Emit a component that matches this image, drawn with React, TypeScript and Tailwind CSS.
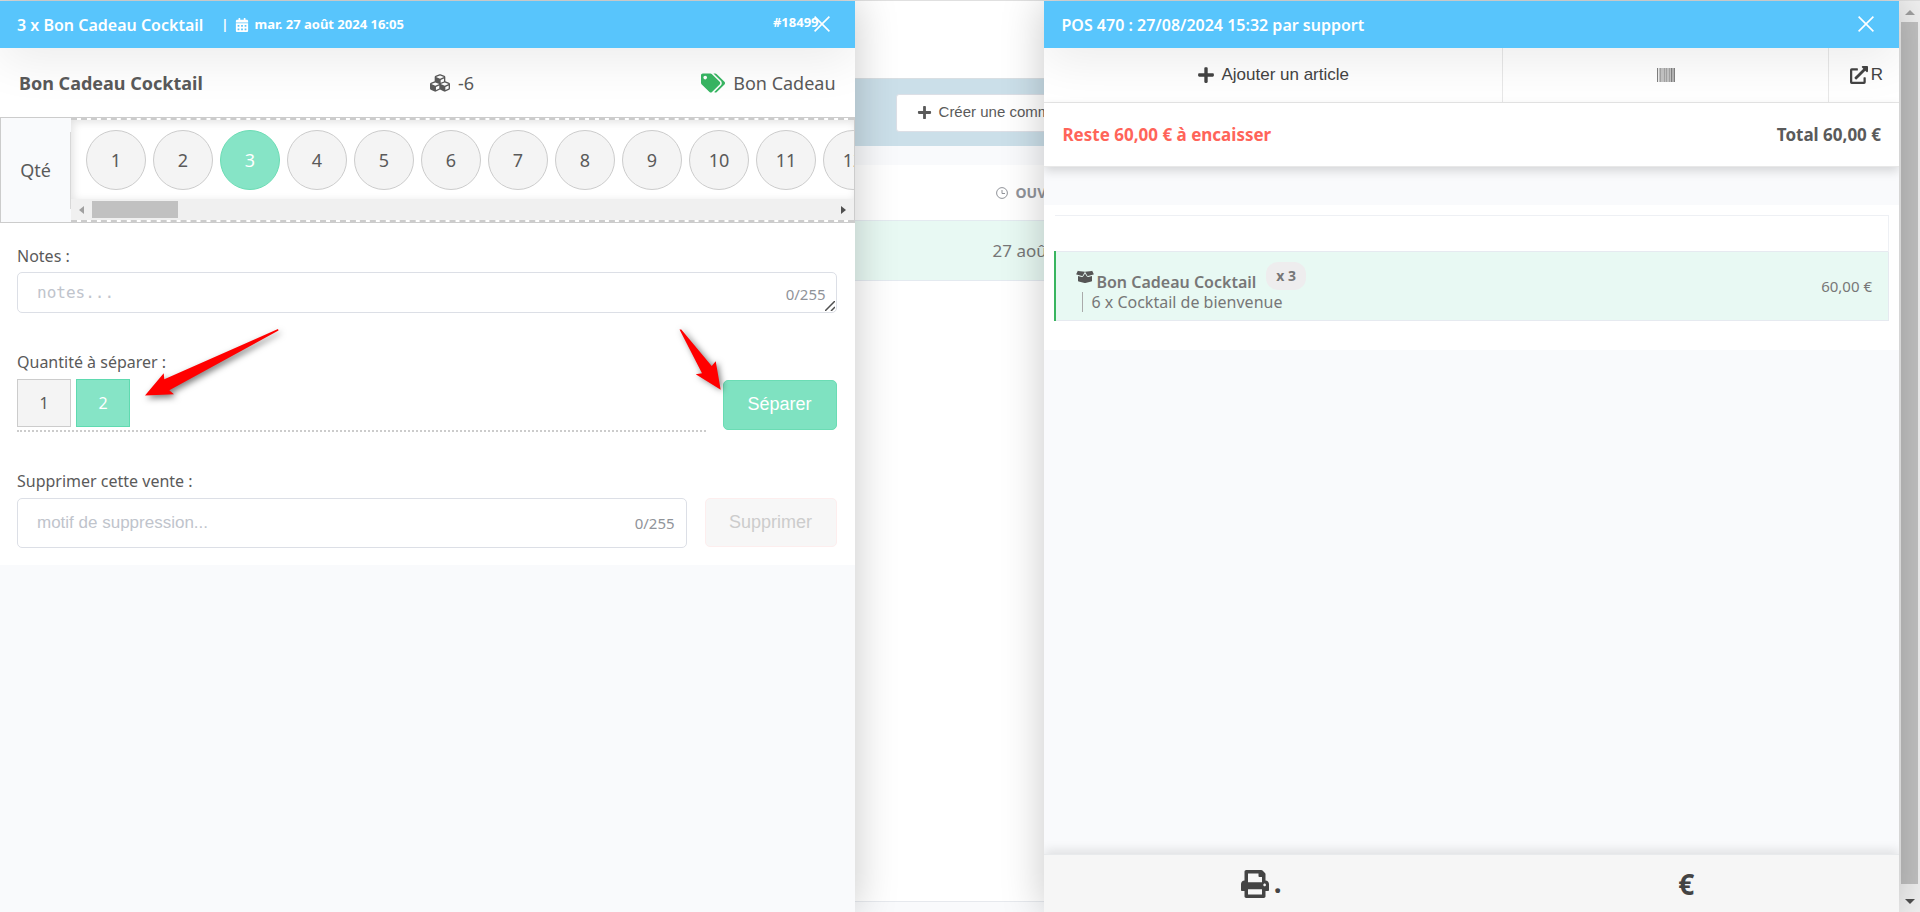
import { useState } from "react"
import type { ReactNode } from "react"
import { FaBoxOpen, FaCalendarAlt, FaCubes, FaExternalLinkAlt, FaPlus, FaPrint, FaTags } from "react-icons/fa"

const quantities = Array.from({ length: 12 }, (_, i) => i + 1)

function CloseIcon() {
  return (
    <svg viewBox="0 0 16 16" className="h-4 w-4" fill="none" stroke="currentColor" strokeWidth="1.6">
      <path d="M.6.6l14.8 14.8M15.4.6L.6 15.4" />
    </svg>
  )
}

function PanelHeader({ children }: { children: ReactNode }) {
  return (
    <header className="relative z-10 flex h-[47px] shrink-0 items-center bg-[#58c5fc] px-[17px] font-semibold text-white shadow-[0_10px_50px_rgba(0,0,0,0.09)]">
      {children}
      <button aria-label="Fermer" className="absolute top-[15px] right-[25px]">
        <CloseIcon />
      </button>
    </header>
  )
}

function QuantityStrip() {
  const [quantity, setQuantity] = useState(3)

  return (
    <div className="flex h-[106px] border border-[#ccc]">
      <div className="flex w-[70px] shrink-0 items-center bg-[#f9fafc]">
        <span className="flex h-[77px] w-full items-center justify-center border-r border-[#d8d8d8] text-lg">Qté</span>
      </div>
      <div className="flex min-w-0 flex-1 flex-col border-y-2 border-dashed border-[#ccc] bg-white">
        <div className="flex flex-1 items-start gap-[7px] overflow-hidden pt-[10px] pl-[15px] shadow-[inset_2px_2px_8px_rgba(0,0,0,0.12)]">
          {quantities.map((n) => (
            <button
              key={n}
              onClick={() => setQuantity(n)}
              className={`h-[60px] w-[60px] shrink-0 rounded-full border text-lg ${n === quantity
                ? "border-[#6bdcb4] bg-[#86e4c6] text-white"
                : "border-[#ccc] bg-[#f4f4f4]"}`}
            >
              {n}
            </button>
          ))}
        </div>
        <div className="flex h-[21px] items-center bg-[#f0f0f0] px-2">
          <span className="border-y-4 border-r-[5px] border-y-transparent border-r-[#a0a0a0]" />
          <span className="ml-2 h-[17px] w-[86px] bg-[#c1c1c1]" />
          <span className="ml-auto border-y-4 border-l-[5px] border-y-transparent border-l-[#505050]" />
        </div>
      </div>
    </div>
  )
}

function SalePanel() {
  const [split, setSplit] = useState(2)

  return (
    <section className="relative z-10 flex w-[45%] flex-col overflow-hidden bg-[#f9fafc] shadow-[0_0_40px_rgba(0,0,0,0.22)]">
      <PanelHeader>
        <h1 className="text-base">3 x Bon Cadeau Cocktail</h1>
        <span className="ml-[18px] flex items-center text-[13px] font-bold">
          |
          <FaCalendarAlt className="mx-[6px] h-[14px] w-[14px]" />
          mar. 27 août 2024 16:05
        </span>
        <span className="mr-[19px] ml-auto pb-1 text-[13px] font-bold">#18499</span>
      </PanelHeader>

      <div className="flex h-[69px] shrink-0 items-center justify-between bg-white px-[19px] text-lg">
        <strong>Bon Cadeau Cocktail</strong>
        <span className="flex items-center gap-2">
          <FaCubes className="h-5 w-5" />
          -6
        </span>
        <span className="flex items-center gap-2">
          <FaTags className="h-6 w-6 text-[#38b663]" />
          Bon Cadeau
        </span>
      </div>

      <QuantityStrip />

      <form className="bg-white pt-[21px] pr-[18px] pb-[17px] pl-[17px]" onSubmit={(e) => e.preventDefault()}>
        <label htmlFor="notes" className="mb-1 block">Notes :</label>
        <div className="relative">
          <textarea
            id="notes"
            rows={1}
            placeholder="notes..."
            className="block h-[41px] w-full resize-none rounded-[5px] border border-[#dcdfe6] px-[19px] py-2 font-['DejaVu_Sans_Mono',monospace] text-base leading-6 outline-none placeholder:text-[#c0c4cc]"
          />
          <span className="absolute right-[11px] bottom-[9px] text-[15px] leading-5 text-[#909399]">0/255</span>
          <svg viewBox="0 0 10 10" className="absolute right-[2px] bottom-[2px] h-[10px] w-[10px]" stroke="#505050" strokeWidth="1.5">
            <path d="M0 10L10 0M6 10l4-4" />
          </svg>
        </div>

        <div className="relative mt-[37px]">
          <p className="mb-[5px]">Quantité à séparer :</p>
          <div className="flex items-start gap-[17px]">
            <div className="flex h-[53px] flex-1 gap-[5px] border-b-2 border-dotted border-[#ccc]">
              {[1, 2].map((n) => (
                <button
                  key={n}
                  type="button"
                  onClick={() => setSplit(n)}
                  className={`h-12 w-[54px] border ${n === split
                    ? "border-[#5fdab0] bg-[#86e4c6] text-white"
                    : "border-[#ccc] bg-[#f4f4f4]"}`}
                >
                  {n}
                </button>
              ))}
            </div>
            <button className="mt-px h-[50px] w-[114px] rounded-[5px] border border-[#6bdcb4] bg-[#7fe2c1] pb-[2px] font-['Liberation_Sans',sans-serif] text-lg text-white">
              Séparer
            </button>
          </div>
          <svg viewBox="140 325 150 80" className="pointer-events-none absolute top-[-25px] left-[123px] h-20 w-[150px] drop-shadow-[2px_3px_3px_rgba(0,0,0,0.5)]" fill="#f00">
            <path d="M278 329L164.300 379.300L163.700 373.300L145 395.500L174 394.300L169.300 390.300L278.500 330.500Z" />
          </svg>
          <svg viewBox="675 325 50 70" className="pointer-events-none absolute top-[-25px] right-[112px] h-[70px] w-[50px] drop-shadow-[2px_1px_3px_rgba(0,0,0,0.5)]" fill="#f00">
            <path d="M679.500 329.500L681.300 329.500L711.700 366L715.700 361.300L720.700 389.700L695.700 374.300L702 373.300Z" />
          </svg>
        </div>

        <label htmlFor="reason" className="mt-[37px] mb-[5px] block">Supprimer cette vente :</label>
        <div className="flex gap-[18px]">
          <div className="relative flex-1">
            <input
              id="reason"
              type="text"
              placeholder="motif de suppression..."
              className="block h-[50px] w-full rounded-[5px] border border-[#dcdfe6] px-[19px] font-['Liberation_Sans',sans-serif] text-[17px] outline-none placeholder:text-[#c0c4cc]"
            />
            <span className="absolute right-3 bottom-[15px] text-[15px] leading-5 text-[#909399]">0/255</span>
          </div>
          <button disabled className="h-[49px] w-[132px] rounded-[5px] border border-[#fdeeee] bg-[#f7f7f7] pb-[2px] font-['Liberation_Sans',sans-serif] text-lg text-[#ccc]">
            Supprimer
          </button>
        </div>
      </form>
    </section>
  )
}

function OrdersPage() {
  return (
    <main className="flex min-w-0 flex-1 flex-col overflow-hidden whitespace-nowrap">
      <div className="h-[77px] shrink-0 bg-white" />
      <div className="flex h-[68px] shrink-0 items-center border-t border-[#d9dfe3] bg-[#cbdfe9] pl-[41px]">
        <button className="flex h-[38px] shrink-0 items-center gap-[7px] rounded-[3px] border border-[#dcdfe6] bg-white px-5 font-['Liberation_Sans',sans-serif] text-[15px]">
          <FaPlus className="h-[15px] w-[15px]" />
          Créer une commande
        </button>
      </div>
      <div className="h-[19px] shrink-0 bg-[#f9fafc]" />
      <div className="flex h-[55px] shrink-0 items-center gap-2 bg-white pl-[141px] text-sm font-bold text-[#909399]">
        <svg viewBox="0 0 12 12" className="h-3 w-3 shrink-0" fill="none" stroke="currentColor">
          <circle cx="6" cy="6" r="5.400" />
          <path d="M6 3v3.500h3" />
        </svg>
        OUVERTURE
      </div>
      <div className="flex h-[61px] shrink-0 items-center border-y border-[#e4eaf0] bg-[#e8f9f3] pl-[138px] text-[17px] text-[#777]">
        27 août 2024
      </div>
      <div className="flex-1 bg-white" />
      <div className="h-[11px] shrink-0 border-t border-[#e6e9ee] bg-[#f9fafc]" />
    </main>
  )
}

function BarcodeIcon() {
  return (
    <svg viewBox="0 0 18 14" className="h-[14px] w-[18px]">
      <rect width="18" height="14" fill="#c4c4c4" />
      <path d="M.5 0v14M14.500 0v14M17.500 0v14" stroke="#808080" />
      <path d="M3.500 0v14M7.500 0v14M9.500 0v14M12.500 0v14M16 0v14" stroke="#a4a4a4" />
      <path d="M1.500 0v14" stroke="#eee" />
    </svg>
  )
}

function OrderPanel() {
  return (
    <section className="relative z-10 flex w-[45%] flex-col overflow-hidden bg-[#f9fafc] shadow-[0_0_40px_rgba(0,0,0,0.22)]">
      <PanelHeader>
        <h2 className="text-base">POS 470 : 27/08/2024 15:32 par support</h2>
      </PanelHeader>

      <div className="flex h-[55px] shrink-0 border-b border-[#e8e8e8] bg-white font-['Liberation_Sans',sans-serif] text-[17px] text-[#444]">
        <button className="flex flex-1 items-center justify-center gap-[6px] border-r border-[#e8e8e8]">
          <FaPlus className="h-[18px] w-[18px]" />
          Ajouter un article
        </button>
        <button aria-label="Code-barres" className="flex w-[326px] items-center justify-center border-r border-[#e8e8e8]">
          <BarcodeIcon />
        </button>
        <button className="flex w-[70px] items-center justify-end gap-[3px] pr-4">
          <FaExternalLinkAlt className="h-[18px] w-[18px]" />
          R
        </button>
      </div>
      <div className="relative flex h-16 shrink-0 items-center justify-between border-b border-[#e8e8e8] bg-white px-[18px] text-[17px] font-bold shadow-[0_4px_10px_rgba(0,0,0,0.15)]">
        <span className="text-[#ff6459]">Reste 60,00 € à encaisser</span>
        <span>Total 60,00 €</span>
      </div>

      <div className="mt-[38px] bg-white px-[10px] pt-[10px] pb-[29px]">
        <table className="w-full border-collapse text-[#777]">
          <thead>
            <tr>
              <th className="h-9 border-t border-r border-[#eef0f4]" colSpan={2} aria-label="Articles" />
            </tr>
          </thead>
          <tbody>
            <tr className="h-[69px] border-y border-r border-[#e6eaf0] bg-[#e8f9f3]">
              <td className="border-l-2 border-l-[#38b55f] pl-5">
                <div className="flex h-[31px] items-end">
                  <FaBoxOpen className="mb-2 h-[14px] w-[18px] text-[#555]" />
                  <span className="ml-[2px] text-base leading-5 font-semibold">Bon Cadeau Cocktail</span>
                  <span className="mb-[2px] ml-[10px] rounded-xl bg-[#eeedee] px-[10px] text-sm leading-7 font-bold">x 3</span>
                </div>
                <div className="ml-[6px] border-l border-[#aaa] pl-2 text-base leading-5">6 x Cocktail de bienvenue</div>
              </td>
              <td className="pr-4 text-right text-[15px]">60,00 €</td>
            </tr>
          </tbody>
        </table>
      </div>

      <footer className="relative mt-auto flex h-[58px] shrink-0 border-t border-[#e8eaec] bg-[#f6f6f6] text-[#444] shadow-[0_-4px_10px_rgba(0,0,0,0.1)]">
        <button aria-label="Imprimer" className="flex flex-1 items-center justify-center gap-[5px] pl-1 text-[28px] leading-6 font-bold">
          <FaPrint className="h-7 w-7" />
          <span className="pb-1">.</span>
        </button>
        <button className="flex-1 text-[28px] font-bold">€</button>
      </footer>
    </section>
  )
}

function PageScrollbar() {
  return (
    <div className="flex w-[21px] shrink-0 flex-col items-center bg-[#f0f0f0] pt-[9px] pb-[8px]">
      <span className="border-x-[5px] border-b-[5px] border-x-transparent border-b-[#a0a0a0]" />
      <span className="mt-[7px] mb-[15px] w-[17px] flex-1 bg-[#c1c1c1]" />
      <span className="border-x-[5px] border-t-[5px] border-x-transparent border-t-[#505050]" />
    </div>
  )
}

export default function App() {
  return (
    <div className="flex h-screen border-t border-[#e0e0e0] bg-white font-['Noto_Sans','Open_Sans',sans-serif] text-base text-[#5a5a5a]">
      <div className="flex min-w-0 flex-1">
        <SalePanel />
        <OrdersPage />
        <OrderPanel />
      </div>
      <PageScrollbar />
    </div>
  )
}
